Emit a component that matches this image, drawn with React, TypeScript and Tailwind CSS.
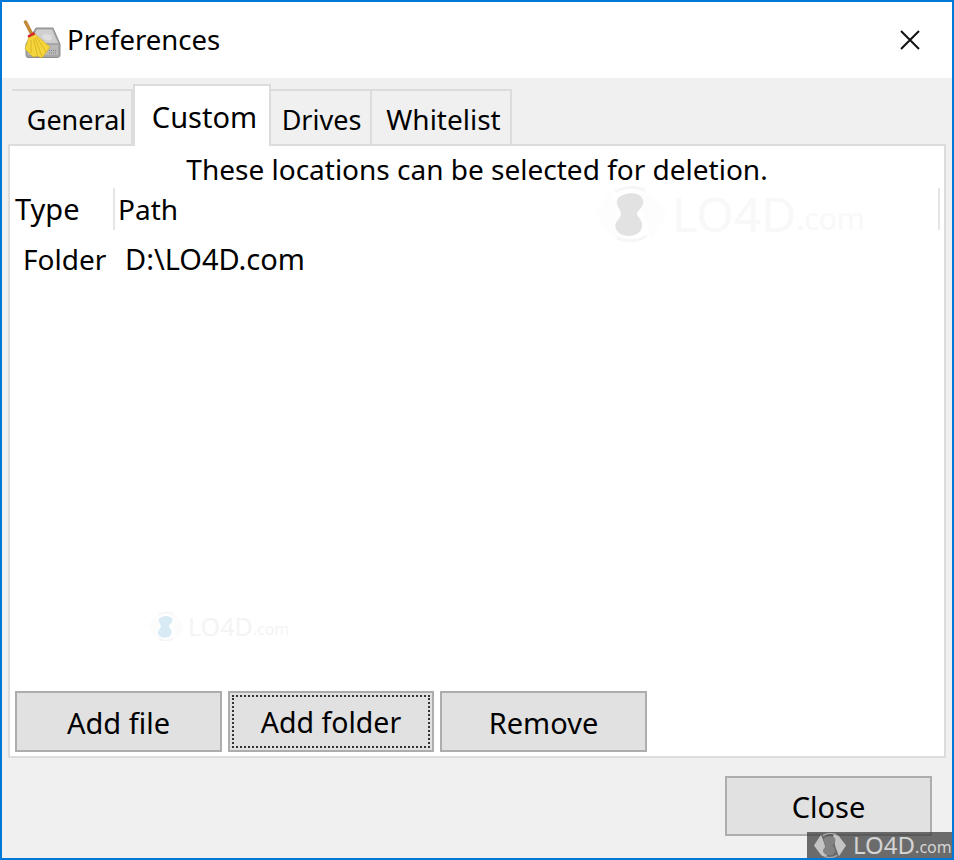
import type { ReactNode } from 'react';

function BroomIcon() {
  return (
    <svg width="38" height="40" viewBox="0 0 38 40" fill="none">
      <path d="M13 8h17l7 16v11c0 1.500-.8 2.500-2.400 2.500H5C3.500 37.500 3 36.500 3 35V24z" fill="#a6a6a6" stroke="#8c8c8c" />
      <path d="M14 9.500h15l6 13.500H6z" fill="#cfcfcf" />
      <path d="M20 15c3-2 8-1 9 2s-3 4-6 3-5-3-3-5z" fill="#dedede" />
      <path d="M5 25h30v10H5z" fill="#b9b9b9" />
      <path d="M26 30.500h8M26 33h8" stroke="#808080" strokeDasharray="1 1" />
      <path d="M2.500 2 8.500 13.500" stroke="#c08a3a" strokeWidth="3.500" strokeLinecap="round" />
      <path d="M4.500 15.500 11 12l1.500 2.500-7 3.500z" fill="#d8232a" />
      <path d="M5.500 18 12.500 14.500 27 27l-5 7-3 4-4.500-2-4.500 1-4-4-4-4z" fill="#f4d63c" stroke="#cfa91f" strokeWidth=".6" />
      <path d="M8 20 8 33M10.500 19 14.500 35.500M12 17.500 19 37M13.500 17 23 32" stroke="#d8ad1f" strokeWidth=".8" />
    </svg>
  );
}

function LogoMark({ width, height, arrow, ring, blob }: { width: number; height: number; arrow: string; ring: string; blob: string }) {
  return (
    <svg width={width} height={height} viewBox="0 0 74 56" fill="none" className="shrink-0">
      <path d="M1 28 17 4l8 22 5 26c-6 1-11-1-13-3z" fill={arrow} />
      <path d="M73 28 57 52l-8-22-5-26c6-1 11 1 13 3z" fill={arrow} />
      <path d="M21 6a30 28 0 0 1 30-2M53 50a30 28 0 0 1-30 2" stroke={ring} strokeWidth="3" />
      <path d="M24 12c7-6 22-7 25 2 2 7-6 10-6 14 1 4 8 8 4 16-4 8-21 8-25-1-3-7 5-10 5-15 0-5-7-9-3-16z" fill={blob} />
    </svg>
  );
}

function Tab({ label, active, className }: { label: string; active?: boolean; className: string }) {
  return (
    <div
      className={
        active
          ? `relative z-10 -mb-[2px] flex h-[62px] items-start justify-center border-2 border-b-0 border-[#dcdcdc] bg-white pt-[11px] ${className}`
          : `flex h-[55px] items-start justify-center border-t-2 border-r-2 border-[#dcdcdc] pt-[9px] ${className}`
      }
    >
      {label}
    </div>
  );
}

function ActionButton({ children, focused, className }: { children: ReactNode; focused?: boolean; className: string }) {
  return (
    <button className={`flex items-center justify-center border-2 border-[#adadad] bg-[#e1e1e1] text-[29px] text-black ${className}`}>
      {focused ? (
        <span className="flex h-full w-full items-center justify-center border-2 border-dotted border-[#333] pt-[2px] text-[28.500px]">
          {children}
        </span>
      ) : (
        <span className="pt-[2px]">{children}</span>
      )}
    </button>
  );
}

export default function App() {
  return (
    <div className="relative flex h-[860px] w-[954px] flex-col overflow-hidden border-2 border-[#0078d7] bg-[#f0f0f0] font-['Noto_Sans','Open_Sans',sans-serif] text-[28px] text-black">
      <header className="flex h-[76px] shrink-0 items-center bg-white pr-[32px] pl-[21px]">
        <BroomIcon />
        <span className="ml-[6px] flex-1 text-[27.500px]">Preferences</span>
        <svg width="20" height="20" viewBox="0 0 20 20" stroke="#111" strokeWidth="2">
          <path d="M1 1l18 18M19 1 1 19" />
        </svg>
      </header>

      <div className="flex h-[66px] shrink-0 items-end pl-[10px]">
        <Tab label="General" className="w-[121px] pl-[10px] text-[27px] leading-[40px]" />
        <Tab label="Custom" active className="w-[138px] pl-[5px] text-[29px] leading-[40px]" />
        <Tab label="Drives" className="w-[101px] pl-[2px] text-[27px] leading-[40px]" />
        <Tab label="Whitelist" className="w-[140px] pl-[5px] leading-[38px]" />
      </div>

      <main className="relative mx-[6px] flex h-[614px] shrink-0 flex-col border-2 border-[#dcdcdc] bg-white">
        <p className="pt-[5px] text-center leading-[36px]">These locations can be selected for deletion.</p>
        <div className="mt-[1px] flex h-[42px] items-center">
          <span className="w-[103px] pl-[5px] text-[29px]">Type</span>
          <span className="h-full border-l-2 border-[#e5e5e5] pl-[3px] leading-[42px]">Path</span>
          <span className="mr-[4px] ml-auto h-full border-l-2 border-[#e5e5e5]" />
        </div>
        <div className="mt-[7px] flex h-[44px] items-center">
          <span className="w-[102px] pl-[13px]">Folder</span>
          <span className="pl-[13px] text-[29px]">D:\LO4D.com</span>
        </div>
        <div className="mt-auto mb-[4px] flex gap-[6px] pl-[5px]">
          <ActionButton className="h-[61px] w-[207px]">Add file</ActionButton>
          <ActionButton focused className="h-[61px] w-[206px] p-[2px]">Add folder</ActionButton>
          <ActionButton className="h-[61px] w-[207px]">Remove</ActionButton>
        </div>
        <div className="absolute top-[40px] left-[584px] flex items-center">
          <LogoMark width={74} height={56} arrow="#fdfdfd" ring="#f6f6f6" blob="#e2e2e2" />
          <span className="ml-[4px] text-[48px] leading-none text-[#f8f8f8]">LO4D</span>
          <span className="mt-[10px] text-[30px] leading-none text-[#f8f8f8]">.com</span>
        </div>
        <div className="absolute top-[466px] left-[137px] flex items-center">
          <LogoMark width={38} height={29} arrow="#fcfcfc" ring="#f4f4f4" blob="#d8ebf5" />
          <span className="ml-[3px] text-[25px] leading-none text-[#f4f4f4]">LO4D</span>
          <span className="mt-[5px] text-[16px] leading-none text-[#f4f4f4]">.com</span>
        </div>
      </main>

      <div className="flex flex-1 items-start justify-end pt-[18px] pr-[20px]">
        <ActionButton className="h-[60px] w-[207px]">Close</ActionButton>
      </div>

      <div className="absolute -right-[2px] bottom-0 flex h-[26px] w-[147px] items-center bg-[#3f3f3f]/75 pl-[6px] text-[#d4d4d4]">
        <LogoMark width={34} height={25} arrow="#c4c4c4" ring="#a8a8a8" blob="#828282" />
        <span className="ml-[6px] text-[24px] leading-none">LO4D</span>
        <span className="mt-[4px] text-[16px] leading-none">.com</span>
      </div>
    </div>
  );
}
